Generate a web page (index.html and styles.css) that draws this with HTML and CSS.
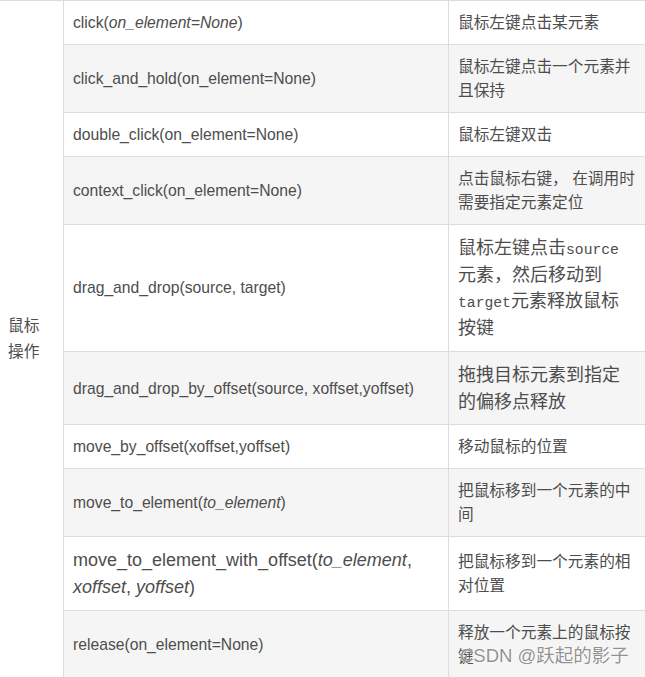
FILE: index.html
```html
<!DOCTYPE html>
<html lang="zh-CN">
<head>
<meta charset="utf-8">
<title>ActionChains 鼠标操作</title>
<link rel="stylesheet" href="styles.css">
</head>
<body>
<div class="page">
  <table class="api-table">
    <colgroup>
      <col class="c1">
      <col class="c2">
      <col class="c3">
    </colgroup>
    <tbody>
      <tr>
        <td class="group" rowspan="10">鼠标操作</td>
        <td>click(<em>on_element=None</em>)</td>
        <td>鼠标左键点击某元素</td>
      </tr>
      <tr class="alt">
        <td>click_and_hold(on_element=None)</td>
        <td>鼠标左键点击一个元素并且保持</td>
      </tr>
      <tr>
        <td>double_click(on_element=None)</td>
        <td>鼠标左键双击</td>
      </tr>
      <tr class="alt">
        <td>context_click(on_element=None)</td>
        <td>点击鼠标右键， 在调用时需要指定元素定位</td>
      </tr>
      <tr>
        <td>drag_and_drop(source, target)</td>
        <td class="lg">鼠标左键点击<code>source</code>元素，然后移动到<code>target</code>元素释放鼠标按键</td>
      </tr>
      <tr class="alt">
        <td>drag_and_drop_by_offset(source, xoffset,yoffset)</td>
        <td class="lg">拖拽目标元素到指定的偏移点释放</td>
      </tr>
      <tr>
        <td>move_by_offset(xoffset,yoffset)</td>
        <td>移动鼠标的位置</td>
      </tr>
      <tr class="alt">
        <td>move_to_element(<em>to_element</em>)</td>
        <td>把鼠标移到一个元素的中间</td>
      </tr>
      <tr>
        <td class="lg">move_to_element_with_offset(<em>to_element</em>, <em>xoffset</em>, <em>yoffset</em>)</td>
        <td>把鼠标移到一个元素的相对位置</td>
      </tr>
      <tr class="alt">
        <td>release(on_element=None)</td>
        <td>释放一个元素上的鼠标按键</td>
      </tr>
    </tbody>
  </table>
  <div class="watermark">CSDN @跃起的影子</div>
</div>
</body>
</html>
```

FILE: styles.css
```css
html, body {
  margin: 0;
  padding: 0;
  background: #ffffff;
}

body {
  overflow: hidden;
}

.page {
  position: relative;
  width: 645px;
  height: 677px;
  overflow: hidden;
}

.api-table {
  border-collapse: collapse;
  table-layout: fixed;
  width: 647px;
  margin: 0 0 0 -1px;
  font-family: "Liberation Sans", Arial, "Noto Sans CJK SC", sans-serif;
  font-size: 15.7px;
  line-height: 24px;
  color: #4d4d4d;
}

.c1 { width: 64px; }
.c2 { width: 385px; }
.c3 { width: 198px; }

.api-table td {
  border: 1px solid #dddddd;
  padding: 10px 10px 9px 9px;
  vertical-align: middle;
  text-align: left;
  word-break: normal;
}

.api-table td:last-child {
  padding-right: 10.5px;
}

.api-table tr.alt td {
  background: #f5f5f5;
}

.api-table td.group {
  background: #ffffff;
  padding: 0 14px 0 8px;
  line-height: 26px;
}

.api-table em {
  font-style: italic;
}

.api-table td.lg {
  font-size: 18px;
  line-height: 26.7px;
}

.api-table code {
  font-family: "Liberation Mono", "DejaVu Sans Mono", monospace;
  font-size: 14.7px;
  line-height: 1;
}

.watermark {
  position: absolute;
  left: 460px;
  top: 645px;
  font-family: "Liberation Sans", Arial, "Noto Sans CJK SC", sans-serif;
  font-size: 18.5px;
  line-height: 22px;
  color: rgba(125, 125, 125, 0.85);
  white-space: nowrap;
  text-shadow: 0 0 2px #ffffff, 0 0 1px #ffffff;
}
```
